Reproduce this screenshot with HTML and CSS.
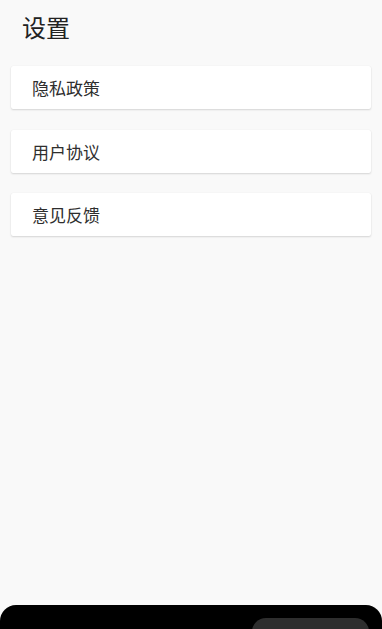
FILE: index.html
```html
<!DOCTYPE html>
<html lang="zh">
<head>
<meta charset="utf-8">
<title>设置</title>
<link rel="stylesheet" href="styles.css">
</head>
<body>
<div class="page">
  <h1 class="title">设置</h1>
  <ul class="menu">
    <li class="card">隐私政策</li>
    <li class="card">用户协议</li>
    <li class="card">意见反馈</li>
  </ul>
</div>
<div class="sheet">
  <div class="pill"></div>
</div>
</body>
</html>
```
FILE: styles.css
```css
html, body {
  margin: 0;
  padding: 0;
  height: 100%;
  background: #f9f9f9;
  font-family: "Noto Sans CJK SC", "Noto Sans", sans-serif;
  overflow: hidden;
}
.page {
  padding: 11px 11px 0;
}
.title {
  margin: 0 0 0 11px;
  font-size: 24px;
  line-height: 32px;
  font-weight: 400;
  color: #222;
}
.menu {
  list-style: none;
  margin: 23px 0 0;
  padding: 0;
  display: flex;
  flex-direction: column;
  gap: 20.5px;
}
.card {
  height: 43px;
  display: flex;
  align-items: center;
  padding-left: 21px;
  background: #fff;
  border-radius: 2px;
  box-shadow: 0 1px 2px rgba(0,0,0,0.14), 0 0 1px rgba(0,0,0,0.08);
  font-size: 17px;
  color: #2e2e2e;
}
.sheet {
  position: fixed;
  left: 0;
  right: 0;
  bottom: 0;
  height: 24px;
  background: #000;
  border-radius: 16px 16px 0 0;
}
.pill {
  position: absolute;
  left: 252px;
  width: 117px;
  top: 13px;
  height: 30px;
  background: #2e2e2e;
  border-radius: 14px;
}
```
